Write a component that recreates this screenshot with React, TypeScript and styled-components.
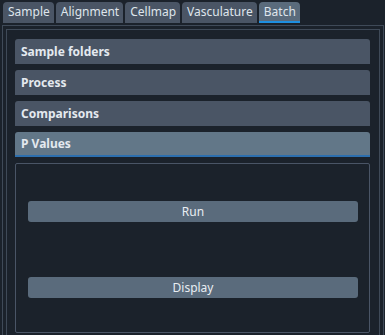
import React from "react";
import styled, { createGlobalStyle } from "styled-components";

const Global = createGlobalStyle`
  html, body { margin: 0; padding: 0; background: #1b222b; overflow: hidden; }
  body { font-family: "Noto Sans", "Open Sans", sans-serif; }
`;

const Page = styled.div`
  width: 385px;
  height: 335px;
  overflow: hidden;
  background: #1b222b;
`;

const TabBar = styled.div`
  display: flex;
  gap: 2px;
  padding: 2px 0 0 3px;
  height: 23px;
  box-sizing: border-box;
`;

const Tab = styled.div<{ $active?: boolean }>`
  height: 21px;
  padding: 0 4px 0 5px;
  box-sizing: border-box;
  border-radius: 4px 4px 0 0;
  background: ${(p) => (p.$active ? "#5a6b7c" : "#4a5565")};
  color: #dfe5ec;
  font-size: 12px;
  line-height: 19px;
  border-bottom: ${(p) => (p.$active ? "2px solid #1e8fe0" : "none")};
`;

const OuterFrame = styled.div`
  margin: 2px 0 0 2px;
  width: 382px;
  box-sizing: border-box;
  border: 1px solid #3f4a58;
  padding: 3px 3px 0 3px;
`;

const InnerFrame = styled.div`
  width: 374px;
  box-sizing: border-box;
  border: 1px solid #3f4a58;
  padding: 9px 9px 12px 8px;
  display: flex;
  flex-direction: column;
  gap: 6px;
`;

const Header = styled.div<{ $open?: boolean }>`
  height: 25px;
  box-sizing: border-box;
  border-radius: 3px 3px 0 0;
  background: ${(p) => (p.$open ? "#627788" : "#4a5565")};
  border-bottom: ${(p) => (p.$open ? "2px solid #2d6fae" : "none")};
  color: #e4e9ef;
  font-weight: 700;
  font-size: 12px;
  line-height: ${(p) => (p.$open ? "23px" : "25px")};
  padding-left: 6px;
`;

const Content = styled.div`
  height: 170px;
  box-sizing: border-box;
  border: 1px solid #4a5566;
  border-radius: 2px;
  padding: 37px 11px 0 12px;
  display: flex;
  flex-direction: column;
  gap: 55px;
`;

const Button = styled.div`
  height: 21px;
  border-radius: 3px;
  background: #5a6b7c;
  color: #e8edf2;
  font-size: 12px;
  line-height: 21px;
  text-align: center;
`;

export default function App() {
  const tabs = ["Sample", "Alignment", "Cellmap", "Vasculature", "Batch"];
  return (
    <Page>
      <Global />
      <TabBar>
        {tabs.map((t) => (
          <Tab key={t} $active={t === "Batch"}>
            {t}
          </Tab>
        ))}
      </TabBar>
      <OuterFrame>
        <InnerFrame>
          <Header>Sample folders</Header>
          <Header>Process</Header>
          <Header>Comparisons</Header>
          <Header $open>P Values</Header>
          <Content>
            <Button>Run</Button>
            <Button>Display</Button>
          </Content>
        </InnerFrame>
      </OuterFrame>
    </Page>
  );
}
